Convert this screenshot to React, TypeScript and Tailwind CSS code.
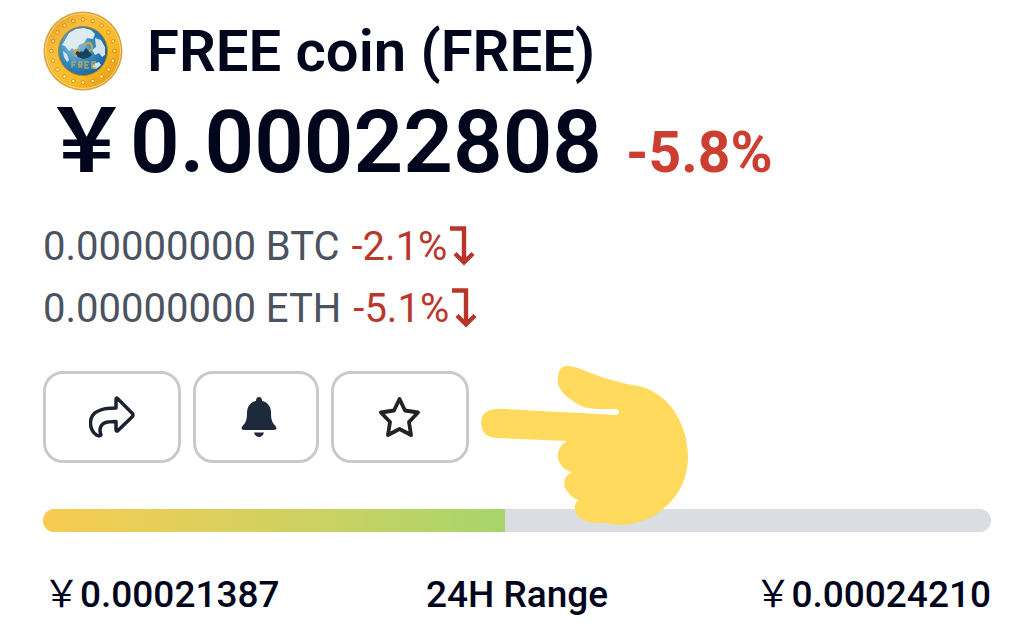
import type { ReactNode } from "react";

const range = { low: 0.00021387, high: 0.0002421, current: 0.00022764 };

function CoinLogo() {
  const dots = Array.from({ length: 20 }, (_, i) => (i * Math.PI) / 10);

  return (
    <svg viewBox="0 0 80 80" className="size-20 shrink-0" aria-hidden="true">
      <defs>
        <linearGradient id="gold" x1="0" y1="0" x2="1" y2="1">
          <stop offset="0" stopColor="#e59a18" />
          <stop offset="0.3" stopColor="#f8bd3c" />
          <stop offset="0.65" stopColor="#f9bd24" />
          <stop offset="1" stopColor="#dc8c10" />
        </linearGradient>
        <radialGradient id="ocean" cx="0.35" cy="0.4" r="0.75">
          <stop offset="0" stopColor="#8cc4e6" />
          <stop offset="0.5" stopColor="#3388be" />
          <stop offset="1" stopColor="#175a94" />
        </radialGradient>
        <filter id="soften">
          <feGaussianBlur stdDeviation="0.7" />
        </filter>
      </defs>
      <circle cx="40" cy="40" r="39.5" fill="#dda03a" />
      <circle cx="40" cy="40" r="37.5" fill="url(#gold)" stroke="#f7d886" />
      <g filter="url(#soften)">
        {dots.map((a) => (
          <circle
            key={a}
            cx={40 + 31.5 * Math.cos(a)}
            cy={40 + 31.5 * Math.sin(a)}
            r="1.8"
            fill={Math.sin(a) > 0.3 ? "#fff0a0" : "#fbd988"}
            stroke="#c98410"
            strokeWidth="0.8"
          />
        ))}
        <circle cx="40" cy="40" r="24.5" fill="url(#ocean)" stroke="#b98219" />
        <path
          d="M21 31l5-9 7-4 8-1 7 2 4 4-2 5-6-1-3 5-5 2-3 6-4-3-3 3-4-5-3-1z"
          fill="#deebef"
        />
        <path
          d="M52 27l6 2 4 7 0 8-3 2-3-4-4 2-3-5 4-3zM20 40l4 3 2 6-2 2-3-5zM50 53l6-2 2 3-5 4-4-1z"
          fill="#cfe4ee"
        />
        <path
          d="M35 46l-3-3 3-4 5 2 3-4 3 3 3 4-4 3-5 1z"
          fill="#1f4258"
        />
        <path
          d="M37 41a3 3 0 1 0-3 4M41 36a4 4 0 1 1 5 4"
          fill="none"
          stroke="#c9a546"
          strokeWidth="2"
        />
        <path
          d="M29 57v-6h4M29 54h3M36 57v-6h3v3h-3l3 3M46 51h-4v6h4M42 54h3M53 51h-4v6h4M49 54h3"
          fill="none"
          stroke="#b5a75c"
          strokeWidth="1.3"
        />
      </g>
    </svg>
  );
}

function DownArrow() {
  return (
    <svg viewBox="0 0 28 42" className="h-[42px] w-7" aria-hidden="true">
      <path
        d="M3 2.500h14v33.500M8 27.500l9 9 9-9"
        fill="none"
        stroke="#b8352a"
        strokeWidth="4.4"
      />
    </svg>
  );
}

function ConversionRow({
  amount,
  change,
}: {
  amount: string;
  change: string;
}) {
  return (
    <div className="flex h-[62px] items-center pt-0.5 text-[40px] whitespace-nowrap text-[#4b5260]">
      <span>{amount}</span>
      <span className="ml-3 text-[#b8382c]">{change}</span>
      <DownArrow />
    </div>
  );
}

function ActionButton({
  label,
  className,
  children,
}: {
  label: string;
  className: string;
  children: ReactNode;
}) {
  return (
    <button
      type="button"
      aria-label={label}
      className={`flex h-[92px] items-center justify-center rounded-[20px] border-3 border-[#c8cbce] ${className}`}
    >
      {children}
    </button>
  );
}

function PointingHand() {
  return (
    <svg
      viewBox="0 0 208 160"
      className="pointer-events-none absolute -top-[6px] left-[438px] z-10 h-[160px] w-[208px]"
      aria-hidden="true"
    >
      <path
        d="M87 1C79 0 76 8 77 18C78 27 91 37 103 42C113 45 124 44 136 44Q140 47 136 50L24 44C10 43 1 46 0 57C0 68 7 73 16 73L86 76C76 82 75 93 79 98C82 104 86 106 91 107C83 111 81 119 86 126C90 132 94 134 98 135C92 138 92 148 99 153C106 158 116 158 124 158L138 160C154 160 171 154 182 144C199 130 207 112 207 92C207 65 194 38 171 26C164 22 158 21 151 20C125 15 108 7 97 3C93 2 91 1 87 1Z"
        fill="#ffda5d"
      />
    </svg>
  );
}

function Yen({ className = "" }: { className?: string }) {
  return (
    <span
      className={`font-['Noto_Sans_CJK_JP',sans-serif] leading-none ${className}`}
    >
      ￥
    </span>
  );
}

export default function App() {
  const progress =
    ((range.current - range.low) / (range.high - range.low)) * 100;

  return (
    <main className="min-h-screen overflow-hidden bg-white pt-[11px] pr-[33px] pb-3 pl-[43px] font-[Roboto,sans-serif] text-[#02061c]">
      <header className="flex items-center gap-6">
        <CoinLogo />
        <h1 className="text-[58px] leading-[80px] font-semibold whitespace-nowrap">
          FREE coin (FREE)
        </h1>
      </header>

      <div className="flex h-[100px] items-baseline leading-[100px] font-semibold whitespace-nowrap">
        <span className="text-[87px]">
          <Yen />
          0.00022808
        </span>
        <span className="ml-6 text-[57px] font-bold text-[#cc3e2f]">-5.8%</span>
      </div>

      <div className="mt-6">
        <ConversionRow amount="0.00000000 BTC" change="-2.1%" />
        <ConversionRow amount="0.00000000 ETH" change="-5.1%" />
      </div>

      <div className="relative mt-8 flex gap-3">
        <ActionButton label="Share" className="w-[138px]">
          <svg viewBox="0 0 46 42" className="h-[42px] w-[46px]">
            <path
              d="M27 3.5Q27 1 29 3L43 17Q45 19 43 21L29 34.500Q27 36 27 33.500V25.500C18 25.500 11 26 11 35Q11 37 12 38.500Q11 41 7.500 39C3 36 1.500 31 1.500 27C1.500 17 9 12 27 12Z"
              fill="none"
              stroke="#1b2230"
              strokeWidth="3.5"
              strokeLinejoin="round"
            />
          </svg>
        </ActionButton>
        <ActionButton label="Price alert" className="w-[126px]">
          <svg viewBox="-6 0 42 42" className="size-[42px]">
            <path
              d="M18 1C16 1 15 2.500 15 5C9 6 6 11 6 17C6 24 4.500 27 1.500 30C-.500 33 1 34 3 34H33C35 34 36.500 33 34.500 30C31.500 27 30 24 30 17C30 11 27 6 21 5C21 2.500 20 1 18 1ZM13 36.500H23C22 40 20 41 18 41S14 40 13 36.500Z"
              fill="#1e293b"
            />
          </svg>
        </ActionButton>
        <ActionButton label="Add to watchlist" className="w-[138px]">
          <svg viewBox="0 0 42 42" className="size-[42px]">
            <path
              d="M20.500 3L26 14.500L39 16.500L30 26L32 39L20.500 33L9 39L11 26L2 16.500L15 14.500Z"
              fill="none"
              stroke="#222326"
              strokeWidth="3.8"
              strokeLinejoin="round"
            />
          </svg>
        </ActionButton>
        <PointingHand />
      </div>

      <div className="mt-[46px] h-[23px] overflow-hidden rounded-full bg-[#dadde2]">
        <div
          className="h-full bg-linear-to-r from-[#f8cb51] to-[#a7d56b]"
          style={{ width: `${progress}%` }}
        />
      </div>

      <div className="mt-9 flex items-baseline justify-between text-[37px] leading-[54px] font-medium whitespace-nowrap">
        <span>
          <Yen className="font-normal" />
          0.00021387
        </span>
        <span>24H Range</span>
        <span>
          <Yen className="font-normal" />
          0.00024210
        </span>
      </div>
    </main>
  );
}
